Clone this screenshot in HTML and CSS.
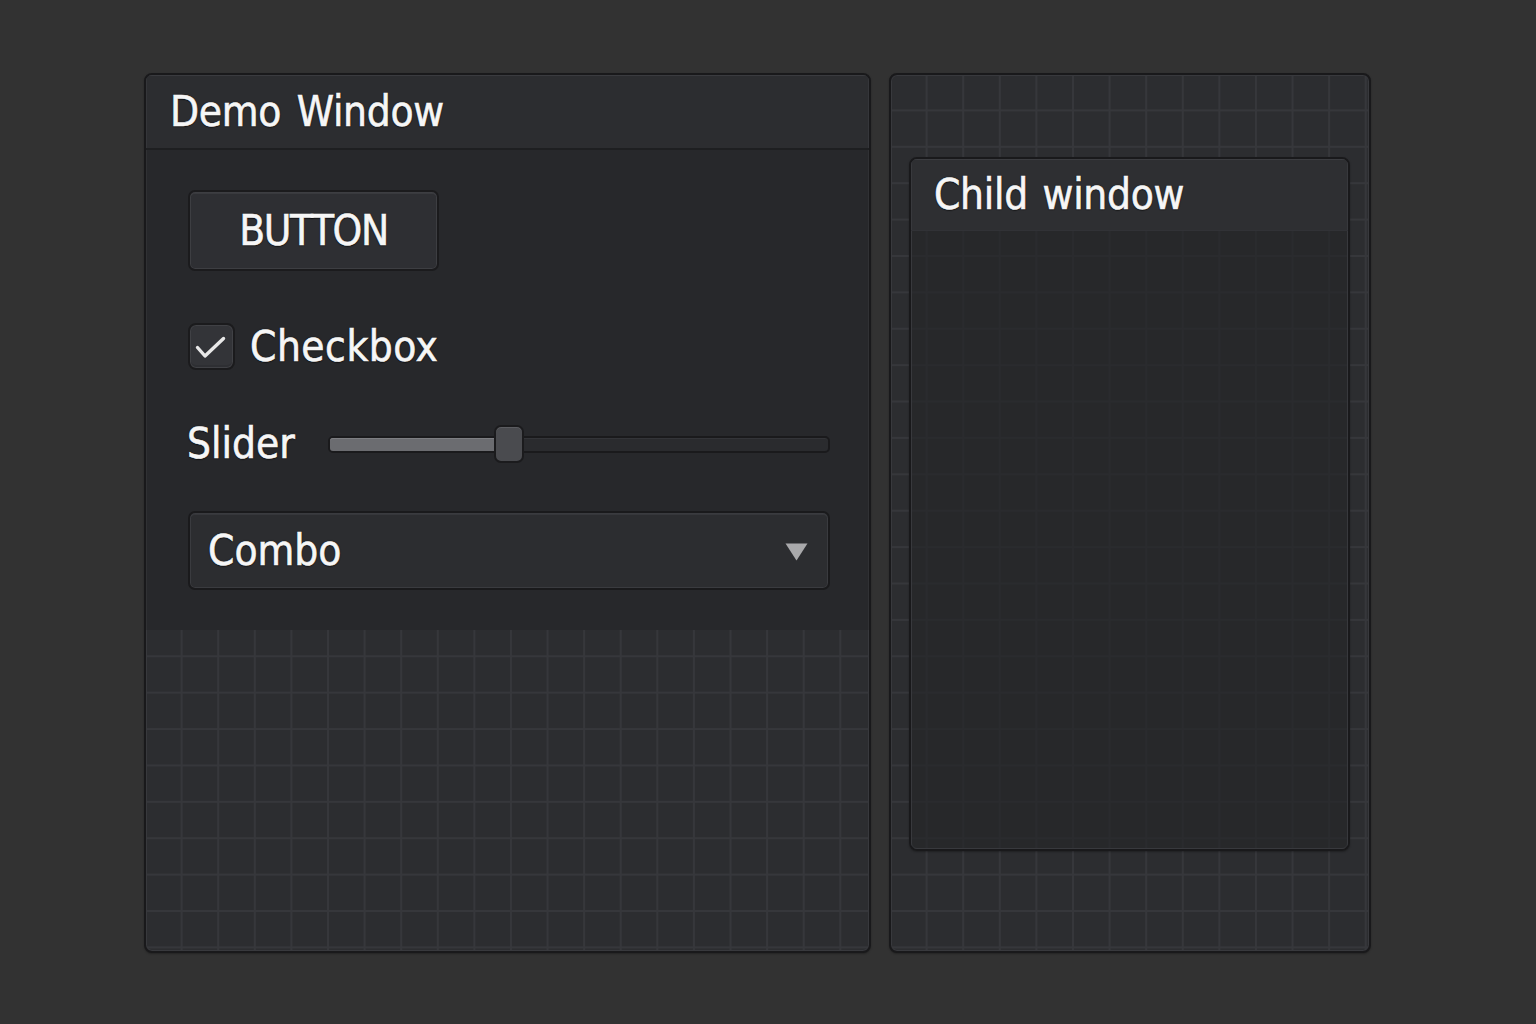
FILE: index.html
```html
<!DOCTYPE html>
<html lang="en">
<head>
<meta charset="utf-8">
<title>Demo Window</title>
<link rel="stylesheet" href="styles.css">
</head>
<body>
<div class="stage">
  <section class="win demo">
    <header class="titlebar"><span class="label">Demo Window</span></header>
    <div class="content">
      <button class="btn" type="button"><span class="label btn-label">BUTTON</span></button>
      <div class="check-row">
        <span class="checkbox">
          <svg width="47" height="47" viewBox="0 0 47 47" aria-hidden="true">
            <path d="M9.5 24.5 L17 33 L35.5 15.5" fill="none" stroke="#e8e8e8" stroke-width="3.4" stroke-linecap="round" stroke-linejoin="round"/>
          </svg>
        </span>
        <span class="label check-label">Checkbox</span>
      </div>
      <div class="slider-row">
        <span class="label slider-label">Slider</span>
        <div class="track">
          <div class="fill" style="width:33%"></div>
          <div class="thumb"></div>
        </div>
      </div>
      <div class="combo">
        <span class="label">Combo</span>
        <svg class="arrow" width="23" height="18" viewBox="0 0 23 18" aria-hidden="true">
          <path d="M0.5 0.5 H22.5 L11.5 17.5 Z" fill="#a9a9ab"/>
        </svg>
      </div>
    </div>
  </section>
  <section class="win side">
    <div class="child">
      <header class="child-title"><span class="label">Child window</span></header>
      <div class="child-body"></div>
    </div>
  </section>
</div>
</body>
</html>
```
FILE: styles.css
```css
html, body {
  margin: 0;
  padding: 0;
}
body {
  width: 1536px;
  height: 1024px;
  background: #323232;
  font-family: "DejaVu Sans Condensed", "DejaVu Sans", sans-serif;
  font-stretch: condensed;
  color: #f6f6f6;
  overflow: hidden;
}
.stage {
  display: flex;
  align-items: flex-start;
  gap: 18px;
  padding: 73px 0 0 144px;
}
.label {
  font-size: 42px;
  line-height: 1;
  white-space: nowrap;
  -webkit-text-stroke: 0.6px #f6f6f6;
  text-shadow: 0 0 1.5px #000, 0 1px 1px rgba(0,0,0,0.7);
}
.win {
  box-sizing: border-box;
  height: 880px;
  border: 2px solid #19191b;
  border-radius: 8px;
  background-color: #2c2d30;
  background-image:
    linear-gradient(to right, transparent 34.6px, #36373b 34.6px),
    linear-gradient(to bottom, transparent 34.4px, #36373b 34.4px);
  background-size: 36.6px 36.4px, 36.6px 36.4px;
  box-shadow: inset 0 0 0 1px #38393d, 0 1px 2px rgba(0,0,0,0.3);
  overflow: hidden;
}
.demo {
  width: 727px;
  display: flex;
  flex-direction: column;
}
.titlebar {
  box-sizing: border-box;
  height: 75px;
  display: flex;
  align-items: center;
  padding-left: 24px;
  background: #2c2d30;
  border-bottom: 2px solid #1e1f21;
  box-shadow: inset 0 1px 0 #3a3b3f, inset 1px 0 0 #35363a, inset -1px 0 0 #35363a;
}
.titlebar .label {
  letter-spacing: -0.3px;
  word-spacing: 4px;
}
.content {
  box-sizing: border-box;
  height: 480px;
  padding: 40px 42px 0 42px;
  background: #27282b;
  display: flex;
  flex-direction: column;
  align-items: flex-start;
  box-shadow: inset 1px 0 0 #303134, inset -1px 0 0 #303134;
}
.btn {
  box-sizing: border-box;
  width: 251px;
  height: 81px;
  margin: 0;
  padding: 0 0 0 0;
  border: 2px solid #1b1b1d;
  border-radius: 7px;
  background: #2e2f33;
  box-shadow: inset 0 0 0 1px #3d3e42, inset 0 2px 0 #393a3e;
  color: #f6f6f6;
  font-family: inherit;
  display: flex;
  align-items: center;
  justify-content: center;
}
.btn-label {
  letter-spacing: -1.4px;
}
.check-row {
  margin-top: 52px;
  display: flex;
  align-items: center;
  gap: 15px;
  height: 47px;
}
.check-label {
  letter-spacing: 0.5px;
}
.checkbox {
  box-sizing: border-box;
  width: 47px;
  height: 47px;
  border: 2px solid #1b1b1d;
  border-radius: 8px;
  background: #333438;
  box-shadow: inset 0 0 0 1px #404145, inset 0 -3px 0 #2e2f33;
  position: relative;
}
.checkbox svg {
  position: absolute;
  left: -2px;
  top: -2px;
}
.slider-row {
  margin-top: 55px;
  height: 38px;
  display: flex;
  align-items: center;
}
.slider-label {
  width: 140px;
  margin-left: -1px;
  margin-right: 1px;
}
.track {
  box-sizing: border-box;
  position: relative;
  width: 502px;
  height: 17px;
  border: 2px solid #1a1a1c;
  border-radius: 5px;
  background: #2a2b2e;
  box-shadow: inset 0 1px 0 #333438;
}
.fill {
  height: 100%;
  border-radius: 3px 0 0 3px;
  background: #6b6c70;
  box-shadow: inset 0 1px 0 #7d7e82;
}
.thumb {
  box-sizing: border-box;
  position: absolute;
  left: 164px;
  top: -13px;
  width: 30px;
  height: 38px;
  border: 2px solid #1b1b1d;
  border-radius: 7px;
  background: #4a4b4f;
  box-shadow: inset 0 1px 0 #5c5d61;
}
.combo {
  box-sizing: border-box;
  margin-top: 48px;
  width: 642px;
  height: 79px;
  border: 2px solid #1a1a1c;
  border-radius: 7px;
  background: #2c2d30;
  box-shadow: inset 0 0 0 1px #3a3b3f, inset 0 2px 0 #36373b;
  display: flex;
  align-items: center;
  justify-content: space-between;
  padding: 0 20px 0 18px;
}
.arrow {
  margin-top: 2px;
}
.side {
  width: 482px;
  padding: 82px 19px 0 18px;
}
.child {
  box-sizing: border-box;
  width: 441px;
  height: 694px;
  border: 2px solid #19191b;
  border-radius: 8px;
  box-shadow: inset 0 0 0 1px #3b3c40, 0 1px 2px rgba(0,0,0,0.3);
  display: flex;
  flex-direction: column;
  overflow: hidden;
  background: rgba(34,35,38,0.4);
}
.child-title {
  box-sizing: border-box;
  height: 72px;
  display: flex;
  align-items: center;
  padding-left: 23px;
  background: #2e2f32;
  border-bottom: 1px solid #313236;
  box-shadow: inset 0 1px 0 #3c3d41, inset 1px 0 0 #38393d, inset -1px 0 0 #38393d;
}
.child-title .label {
  word-spacing: 3px;
  letter-spacing: -0.3px;
}
.child-body {
  flex: 1;
  background: rgba(38,39,42,0.5);
  box-shadow: inset 1px 0 0 #38393d, inset -1px 0 0 #38393d, inset 0 -1px 0 #38393d;
}
```
